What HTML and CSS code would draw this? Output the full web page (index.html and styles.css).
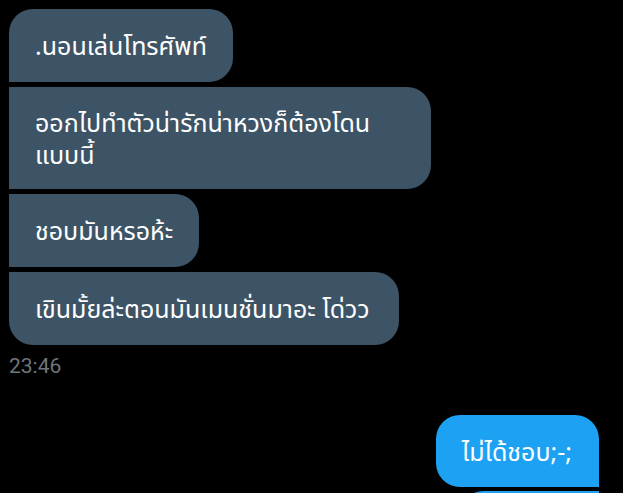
FILE: index.html
```html
<!DOCTYPE html>
<html lang="th">
<head>
<meta charset="utf-8">
<link rel="stylesheet" href="styles.css">
</head>
<body>
<div class="chat">
  <div class="msg in first">.นอนเล่นโทรศัพท์</div>
  <div class="msg in mid wide">ออกไปทำตัวน่ารักน่าหวงก็ต้องโดน<br>แบบนี้</div>
  <div class="msg in mid">ชอบมันหรอห้ะ</div>
  <div class="msg in last">เขินมั้ยล่ะตอนมันเมนชั่นมาอะ โด่วว</div>
  <div class="time">23:46</div>
  <div class="msg out first">ไม่ได้ชอบ;-;</div>
  <div class="msg out mid next"></div>
</div>
</body>
</html>
```
FILE: styles.css
```css
html, body {
  margin: 0;
  padding: 0;
  background: #000;
  height: 100%;
  overflow: hidden;
}
.chat {
  display: flex;
  flex-direction: column;
  align-items: flex-start;
  padding: 9px 24px 0 9px;
  gap: 5px;
  font-family: "Noto Sans", "Noto Sans Thai", "Liberation Sans", sans-serif;
}
.msg {
  font-size: 25px;
  line-height: 32px;
  color: #fff;
  padding: 20px 26px 21px 26px;
  border-radius: 24px;
  box-sizing: border-box;
  white-space: nowrap;
}
.msg.in {
  background: #3d5466;
}
.msg.in.first { border-bottom-left-radius: 0; }
.msg.in.mid { border-top-left-radius: 0; border-bottom-left-radius: 0; }
.msg.in.last { border-top-left-radius: 0; padding-right: 29px; }
.msg.wide { padding-top: 19px; padding-bottom: 19px; width: 422px; }
.time {
  font-family: "Roboto", "Liberation Sans", sans-serif;
  font-size: 21px;
  color: #6e767d;
  margin-top: 4px;
  margin-bottom: 32px;
  line-height: 24px;
}
.msg.out {
  background: #1da1f2;
  align-self: flex-end;
  padding-right: 27px;
  padding-bottom: 20px;
}
.msg.out.first { border-bottom-right-radius: 0; }
.msg.out.next {
  width: 136px;
  height: 40px;
  margin-top: -1px;
  border-top-right-radius: 0;
  flex-shrink: 0;
}
```
